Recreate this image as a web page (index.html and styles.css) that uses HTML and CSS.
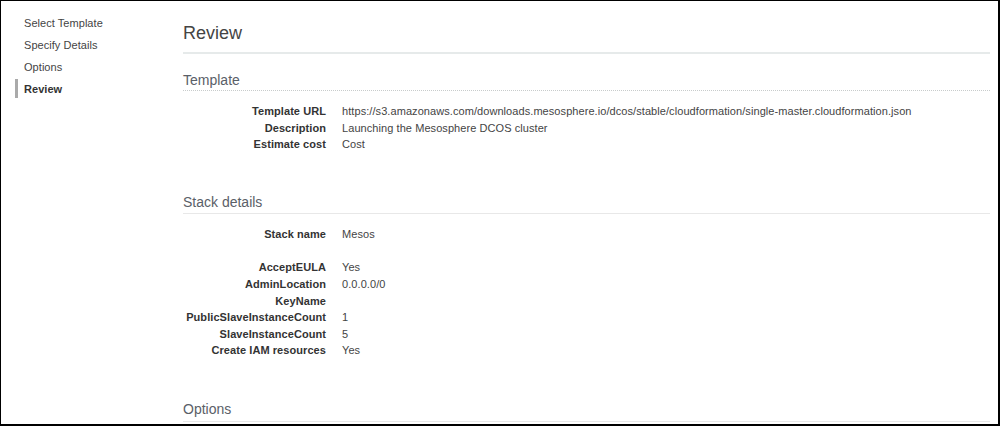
FILE: index.html
```html
<!DOCTYPE html>
<html>
<head>
<meta charset="utf-8">
<link rel="stylesheet" href="styles.css">
</head>
<body>
<div class="frame">
  <nav class="steps">
    <div class="step">Select Template</div>
    <div class="step">Specify Details</div>
    <div class="step">Options</div>
    <div class="step active">Review</div>
  </nav>
  <main class="main">
    <h1 class="title">Review</h1>

    <section class="section">
      <h2 class="sec-head dotted">Template</h2>
      <div class="rows">
        <div class="lbl">Template URL</div><div class="val">https://s3.amazonaws.com/downloads.mesosphere.io/dcos/stable/cloudformation/single-master.cloudformation.json</div>
        <div class="lbl">Description</div><div class="val">Launching the Mesosphere DCOS cluster</div>
        <div class="lbl">Estimate cost</div><div class="val">Cost</div>
      </div>
    </section>

    <section class="section">
      <h2 class="sec-head">Stack details</h2>
      <div class="rows">
        <div class="lbl">Stack name</div><div class="val">Mesos</div>
        <div class="lbl"></div><div class="val"></div>
        <div class="lbl">AcceptEULA</div><div class="val">Yes</div>
        <div class="lbl">AdminLocation</div><div class="val">0.0.0.0/0</div>
        <div class="lbl">KeyName</div><div class="val"></div>
        <div class="lbl">PublicSlaveInstanceCount</div><div class="val">1</div>
        <div class="lbl">SlaveInstanceCount</div><div class="val">5</div>
        <div class="lbl">Create IAM resources</div><div class="val">Yes</div>
      </div>
    </section>

    <section class="section">
      <h2 class="sec-head tail">Options</h2>
    </section>
  </main>
</div>
</body>
</html>
```
FILE: styles.css
```css
html, body {
  margin: 0;
  padding: 0;
  background: #fff;
}
body {
  font-family: "Liberation Sans", Arial, sans-serif;
  color: #444;
}
.frame {
  box-sizing: border-box;
  width: 1000px;
  height: 426px;
  border-style: solid;
  border-color: #000;
  border-width: 1px 2px 2px 1px;
  display: flex;
  overflow: hidden;
}
.steps {
  width: 182px;
  flex: none;
  padding-top: 10.5px;
  box-sizing: border-box;
}
.step {
  font-size: 11px;
  line-height: 22.3px;
  color: #444;
  padding-left: 23px;
  position: relative;
  letter-spacing: 0.05px;
}
.step.active {
  font-weight: bold;
  color: #333;
}
.step.active::before {
  content: "";
  position: absolute;
  left: 14px;
  top: 1px;
  width: 3px;
  height: 19px;
  background: #aaa;
}
.main {
  flex: 1;
  padding: 20px 8px 0 0;
  min-width: 0;
}
.title {
  margin: 0;
  font-size: 18px;
  font-weight: normal;
  line-height: 24px;
  color: #444;
  padding-bottom: 7px;
  border-bottom: 2px solid #e6eaea;
}
.section {
  margin-top: 16px;
}
.section + .section {
  margin-top: 39.5px;
}
.sec-head {
  margin: 0;
  font-size: 14px;
  font-weight: normal;
  line-height: 20px;
  color: #5a6068;
  padding-bottom: 1px;
  border-bottom: 1px solid #e8e8e8;
}
.sec-head.dotted {
  padding-bottom: 0;
  border-bottom: 1px dotted #c8cccc;
}
.sec-head.tail {
  padding-bottom: 2px;
}
.rows {
  display: grid;
  grid-template-columns: 143px 1fr;
  column-gap: 16px;
  padding-top: 12px;
  font-size: 11px;
  line-height: 16.6px;
  letter-spacing: 0.07px;
}
.lbl {
  text-align: right;
  font-weight: bold;
  color: #333;
  min-height: 16.6px;
  white-space: nowrap;
}
.val {
  color: #444;
  min-height: 16.6px;
  white-space: nowrap;
}
```
